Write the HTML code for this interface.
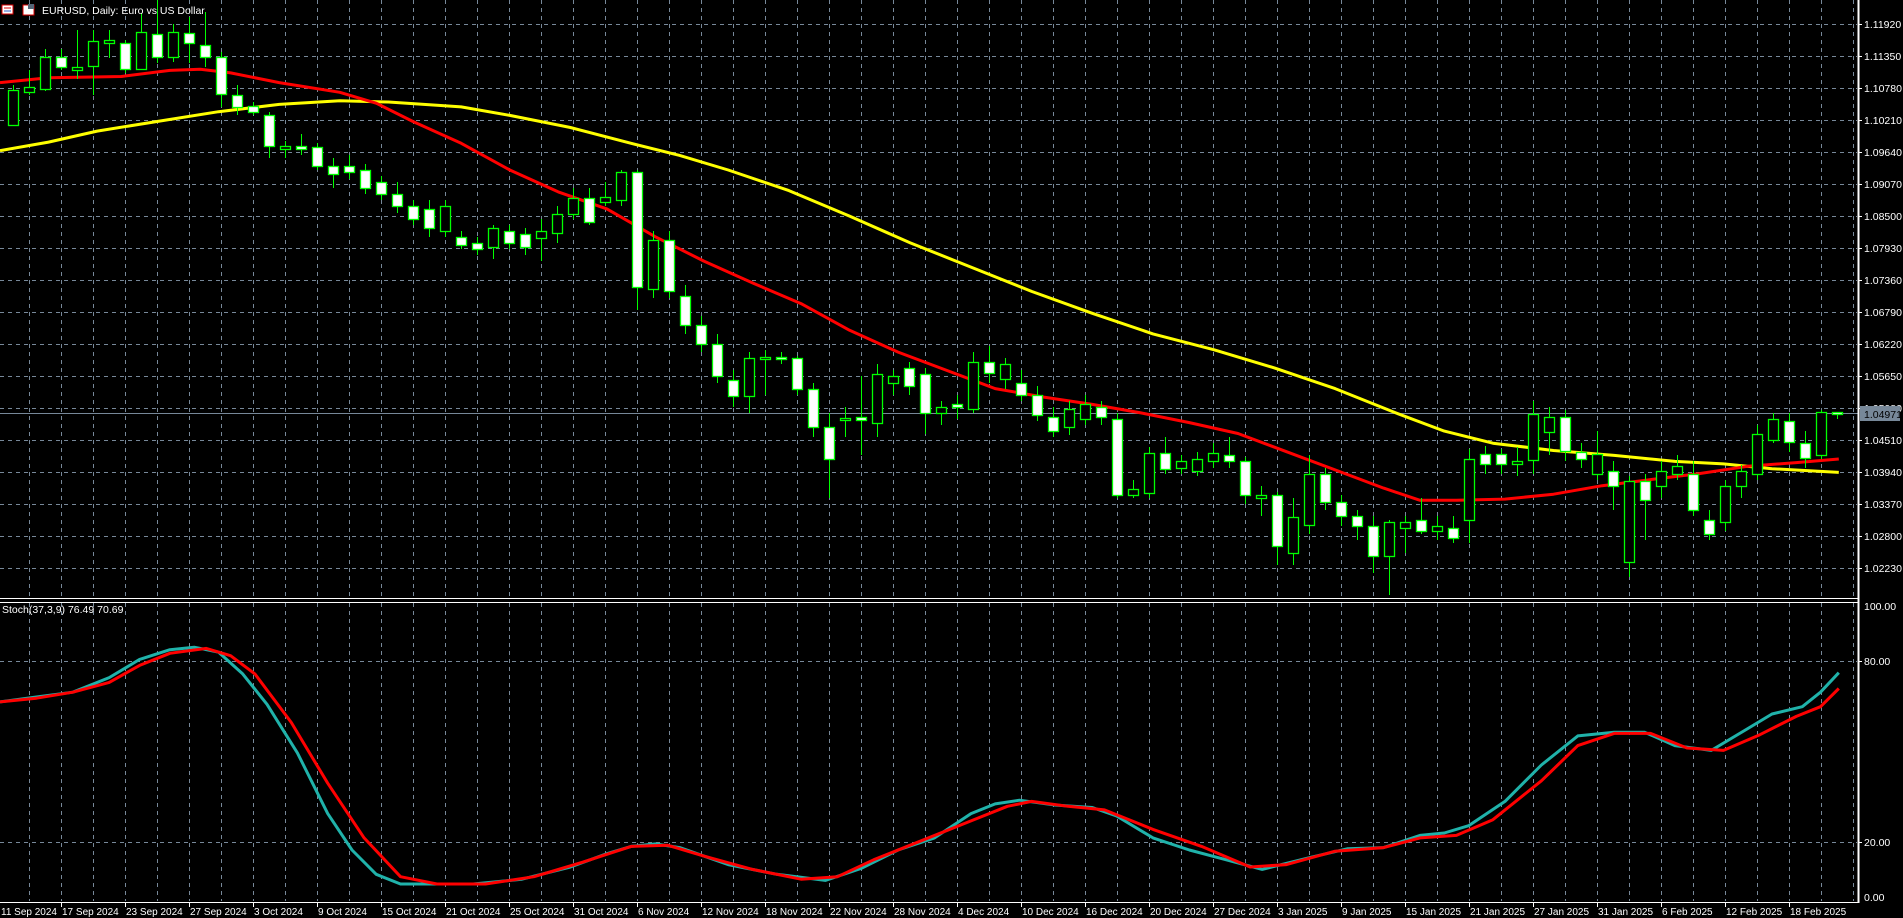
<!DOCTYPE html>
<html><head><meta charset="utf-8"><style>
html,body{margin:0;padding:0;background:#000;overflow:hidden}
svg{display:block}
text{font-family:"Liberation Sans",sans-serif;font-size:10.5px;fill:#fff}
text.d{font-size:10px}
</style></head><body>
<svg id="s" width="1903" height="918" viewBox="0 0 1903 918" xmlns="http://www.w3.org/2000/svg">
<rect width="1903" height="918" fill="#000"/>
<g id="grid" stroke="#778899" stroke-width="1" stroke-dasharray="4,4"></g>
<line x1="0" y1="413.5" x2="1858" y2="413.5" stroke="#778899"/>
<g id="ma" fill="none" stroke-width="3" stroke-linejoin="round"></g>
<g id="cd"></g>
<g id="st" fill="none" stroke-width="3" stroke-linejoin="round"></g>
<g id="ax" stroke="#fff"></g>
<g id="lb"></g>
<rect x="2" y="5" width="11" height="9" fill="#fff" stroke="#d00" stroke-width="1"/>
<line x1="4" y1="8" x2="11" y2="8" stroke="#d00"/><line x1="4" y1="11" x2="11" y2="11" stroke="#36c"/>
<rect x="23" y="5" width="11" height="10" fill="#fff" stroke="#d00"/>
<rect x="28" y="4" width="6" height="5" fill="#567"/>
<text x="42" y="14">EURUSD, Daily:  Euro vs US Dollar</text>
<text x="2" y="613">Stoch(37,3,9) 76.49 70.69</text>
</svg>
<script>
var NS="http://www.w3.org/2000/svg";
function el(p,t,a,txt){var e=document.createElementNS(NS,t);for(var k in a)e.setAttribute(k,a[k]);if(txt)e.textContent=txt;document.getElementById(p).appendChild(e);return e;}
for(var x=29;x<1858;x+=32){el("grid","line",{x1:x+.5,y1:0,x2:x+.5,y2:597});el("grid","line",{x1:x+.5,y1:603,x2:x+.5,y2:901});}
var prices=["1.11920","1.11350","1.10780","1.10210","1.09640","1.09070","1.08500","1.07930","1.07360","1.06790","1.06220","1.05650","1.05080","1.04510","1.03940","1.03370","1.02800","1.02230"];
for(var k=0;k<18;k++){var y=24+32*k;el("grid","line",{x1:0,y1:y+.5,x2:1857,y2:y+.5});el("ax","line",{x1:1858,y1:y+.5,x2:1862,y2:y+.5});el("lb","text",{x:1864,y:y+4},prices[k]);}
[[661,"80.00"],[842,"20.00"]].forEach(function(a){el("grid","line",{x1:0,y1:a[0]+.5,x2:1857,y2:a[0]+.5});el("ax","line",{x1:1858,y1:a[0]+.5,x2:1862,y2:a[0]+.5});el("lb","text",{x:1864,y:a[0]+4},a[1]);});
el("lb","text",{x:1864,y:610},"100.00");el("lb","text",{x:1864,y:901},"0.00");
el("ax","line",{x1:1858.5,y1:0,x2:1858.5,y2:903,"stroke-width":2});
el("ax","line",{x1:0,y1:598.5,x2:1858,y2:598.5});el("ax","line",{x1:0,y1:602.5,x2:1858,y2:602.5});
el("ax","line",{x1:0,y1:902.5,x2:1858,y2:902.5});
el("lb","rect",{x:1860,y:406,width:40,height:15,fill:"#778899"});
el("lb","text",{x:1864,y:418,style:"fill:#000"},"1.04971");
var dates=["17 Sep 2024","23 Sep 2024","27 Sep 2024","3 Oct 2024","9 Oct 2024","15 Oct 2024","21 Oct 2024","25 Oct 2024","31 Oct 2024","6 Nov 2024","12 Nov 2024","18 Nov 2024","22 Nov 2024","28 Nov 2024","4 Dec 2024","10 Dec 2024","16 Dec 2024","20 Dec 2024","27 Dec 2024","3 Jan 2025","9 Jan 2025","15 Jan 2025","21 Jan 2025","27 Jan 2025","31 Jan 2025","6 Feb 2025","12 Feb 2025","18 Feb 2025"];
el("lb","text",{x:1,y:915,"class":"d"},"11 Sep 2024");
for(var i=0;i<dates.length;i++){var x=1789-64*(27-i);el("ax","line",{x1:x+.5,y1:903,x2:x+.5,y2:907});el("lb","text",{x:x+1,y:915,"class":"d"},dates[i]);}
var SX=1.2137,SY=1.2143;
function path(g,c,pts){var d="";pts.forEach(function(p,i){d+=(i?"L":"M")+(p[0]*SX).toFixed(1)+","+(p[1]*SY).toFixed(1);});el(g,"path",{d:d,stroke:c});}
path("ma","#ffff00",[[0,124],[40,117],[80,108],[130,100],[180,92],[230,86],[280,83],[320,84],[380,88],[420,95],[470,105],[520,118],[560,128],[600,140],[650,157],[700,178],[750,200],[800,220],[850,240],[900,258],[950,275],[1000,288],[1050,303],[1100,320],[1150,340],[1190,355],[1230,365],[1280,371],[1330,375],[1380,380],[1420,382],[1460,386],[1515,389]]);
path("ma","#ff0000",[[0,68],[40,64],[100,63],[140,58],[165,57],[190,60],[230,68],[280,76],[310,85],[340,100],[380,118],[420,140],[460,158],[500,172],[540,195],[580,215],[620,233],[660,250],[700,272],[740,290],[780,305],[820,320],[860,327],[900,333],[940,340],[980,348],[1020,357],[1060,372],[1100,387],[1140,402],[1170,412],[1200,412],[1240,411],[1280,407],[1320,400],[1360,395],[1400,390],[1440,384],[1480,381],[1515,378]]);
path("st","#20b2aa",[[0,578],[30,574],[60,570],[90,558],[115,543],[140,535],[160,533],[180,537],[200,555],[220,580],[245,620],[270,670],[290,700],[310,720],[330,728],[360,728],[390,728],[430,724],[470,714],[500,703],[520,697],[540,695],[560,698],[600,712],[640,720],[680,725],[710,715],[740,700],[770,690],[800,670],[820,662],[840,659],[870,663],[900,665],[920,672],[950,690],[980,700],[1010,708],[1040,716],[1080,706],[1110,699],[1140,698],[1170,688],[1190,686],[1210,680],[1240,660],[1270,630],[1300,606],[1330,603],[1355,603],[1380,614],[1410,618],[1440,600],[1460,588],[1485,582],[1500,570],[1515,554]]);
path("st","#ff0000",[[0,578],[30,575],[60,570],[90,562],[115,548],[140,538],[170,534],[190,540],[210,555],[240,595],[270,645],[300,690],[330,722],[360,728],[400,728],[440,722],[480,710],[520,697],[550,696],[580,705],[620,716],[660,724],[690,722],[720,708],[760,692],[800,676],[830,664],[850,660],[880,664],[910,667],[950,683],[990,697],[1030,714],[1060,712],[1100,701],[1140,698],[1170,690],[1200,688],[1230,675],[1270,643],[1300,614],[1330,604],[1360,604],[1390,616],[1420,618],[1450,605],[1480,590],[1500,582],[1515,567]]);
var C=[[74,103,70,104,0],[72,76,58,78,0],[47,73,40,75,0],[47,55,40,58,1],[55,58,25,65,0],[34,54,25,78,0],[33,35,25,48,0],[35,57,33,60,1],[26,57,11,58,0],[28,47,0,52,1],[26,47,20,51,0],[27,35,14,52,1],[37,47,10,55,1],[47,77,43,88,1],[78,88,70,95,1],[87,92,84,95,1],[95,120,92,130,1],[120,123,116,130,0],[120,123,110,128,1],[121,137,118,140,1],[137,143,130,155,1],[137,142,128,147,1],[140,155,135,160,1],[150,160,145,165,1],[160,170,150,175,1],[170,180,165,185,1],[172,188,165,195,1],[170,190,165,195,0],[195,202,190,205,1],[200,205,195,210,1],[188,203,185,213,0],[190,200,185,205,1],[193,203,188,210,1],[190,196,180,215,0],[176,192,170,200,0],[163,176,155,180,0],[163,183,155,185,1],[162,166,150,170,0],[142,165,140,170,0],[142,236,140,255,1],[198,238,190,245,0],[198,240,190,245,1],[244,268,235,275,1],[268,283,260,290,1],[283,310,275,315,1],[313,326,305,335,1],[295,326,290,340,0],[294,296,288,325,0],[294,296,290,300,1],[295,320,293,325,1],[320,352,315,360,1],[352,378,340,410,1],[344,345,335,360,0],[343,346,310,375,1],[308,348,300,360,0],[310,315,305,325,0],[303,318,298,325,1],[308,340,303,357,1],[335,340,330,350,0],[333,335,325,345,1],[298,337,290,340,0],[298,307,285,315,1],[300,312,295,320,0],[315,325,305,330,1],[325,342,318,347,1],[343,355,335,360,1],[337,352,330,358,0],[333,345,325,350,0],[335,343,330,350,1],[345,408,340,410,1],[403,408,395,410,0],[373,406,368,410,0],[373,386,360,390,1],[380,385,375,390,0],[378,388,372,392,0],[373,380,365,385,0],[375,380,360,385,1],[380,408,376,415,1],[408,410,400,425,0],[408,450,405,465,1],[426,455,410,465,0],[390,432,375,440,0],[390,413,385,420,1],[413,425,408,433,1],[425,433,420,445,1],[433,458,425,472,1],[430,458,428,490,0],[430,435,425,455,0],[428,437,410,440,1],[433,437,425,445,0],[435,443,425,447,1],[378,428,370,447,0],[374,382,367,390,1],[374,382,370,390,1],[380,382,368,392,0],[341,379,330,390,0],[343,356,335,375,0],[343,371,338,380,1],[372,378,365,385,1],[374,390,355,395,0],[388,400,380,420,1],[396,463,392,475,0],[396,412,390,445,1],[388,400,380,410,0],[384,390,375,395,0],[390,420,380,425,1],[428,440,420,445,1],[400,430,395,437,0],[388,400,383,410,0],[357,390,350,395,0],[345,362,340,365,0],[347,364,340,372,1],[365,377,355,385,1],[339,375,338,378,0],[339,341,339,345,1]];
for(var i=0;i<C.length;i++){var c=C[i],x=13+16*i,t=Math.round(c[0]*SY),b=Math.round(c[1]*SY),h=Math.round(c[2]*SY),l=Math.round(c[3]*SY);
el("cd","line",{x1:x+.5,y1:h,x2:x+.5,y2:l,stroke:"#00ff00"});
if(b-t<2)b=t+2;
el("cd","rect",{x:x-4.5,y:t+.5,width:10,height:b-t,fill:c[4]?"#fff":"#000",stroke:"#00ff00","stroke-width":1.3});}
</script>
</body></html>
